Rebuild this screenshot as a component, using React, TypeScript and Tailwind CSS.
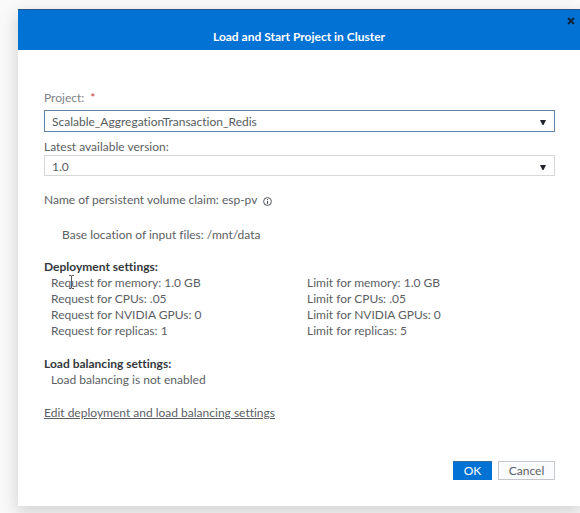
import type { ReactNode } from "react";

function SelectField({
  id,
  value,
  className,
}: {
  id: string;
  value: string;
  className: string;
}) {
  return (
    <div className="grid items-center">
      <select
        id={id}
        defaultValue={value}
        className={`col-start-1 row-start-1 w-full appearance-none rounded-none border bg-white pl-[7px] pr-6 pt-[2px] text-[12px] leading-4 text-[#585c60] outline-none ${className}`}
      >
        <option>{value}</option>
      </select>
      <svg
        viewBox="0 0 6 5"
        className="pointer-events-none col-start-1 row-start-1 mr-[9px] mt-[3px] h-[5px] w-[6px] justify-self-end"
        aria-hidden="true"
      >
        <path d="M0 0H6L3.5 5H2.5Z" fill="#202428" />
      </svg>
    </div>
  );
}

function Settings({ title, children }: { title: string; children: ReactNode }) {
  return (
    <section className="mt-4">
      <h2 className="font-bold text-[#34383c]">{title}</h2>
      {children}
    </section>
  );
}

const requests = [
  "Request for memory: 1.0 GB",
  "Request for CPUs: .05",
  "Request for NVIDIA GPUs: 0",
  "Request for replicas: 1",
];

const limits = [
  "Limit for memory: 1.0 GB",
  "Limit for CPUs: .05",
  "Limit for NVIDIA GPUs: 0",
  "Limit for replicas: 5",
];

export default function App() {
  return (
    <div className="min-h-screen overflow-hidden bg-[#fbfafa] pb-[6px] pl-[18px] pt-[9px] font-['Lato','Liberation_Sans',sans-serif] text-[12px] leading-4 text-[#5c6064] [font-variant-ligatures:none]">
      <div role="dialog" aria-labelledby="title" className="bg-white shadow-[0_6px_16px_2px_rgba(0,0,0,0.15)]">
        <header className="flex h-[41px] flex-col border-t border-[#2a5580] bg-[#0272d4]">
          <button type="button" aria-label="Close" className="mr-[5px] mt-[7px] self-end">
            <svg viewBox="0 0 8 8" className="h-2 w-2" aria-hidden="true">
              <path d="M1 1L7 7M7 1L1 7" stroke="#10243a" strokeWidth="2" />
            </svg>
          </button>
          <h1 id="title" className="mt-1 text-center font-bold text-white">
            Load and Start Project in Cluster
          </h1>
        </header>

        <form className="pb-[26px] pl-[26px] pr-[25px] pt-10">
          <label htmlFor="project" className="block text-[#808386]">
            Project: <span className="ml-[3px] text-[#c43b45]">*</span>
          </label>
          <div className="mt-1">
            <SelectField id="project" value="Scalable_AggregationTransaction_Redis" className="h-[22px] border-[#6685a5]" />
          </div>
          <label htmlFor="version" className="mt-[7px] block">
            Latest available version:
          </label>
          <SelectField id="version" value="1.0" className="h-[21px] border-[#d5d7d9]" />

          <p className="mt-4 flex items-center gap-[6px]">
            Name of persistent volume claim: esp-pv
            <svg viewBox="0 0 9 9" className="mt-[2px] h-[9px] w-[9px]" fill="none" aria-hidden="true">
              <circle cx="4.5" cy="4.5" r="3.9" stroke="#505458" />
              <path d="M4.5 4V7M4.5 2V3.2" stroke="#505458" />
            </svg>
          </p>
          <p className="ml-[18px] mt-[19px]">Base location of input files: /mnt/data</p>

          <Settings title="Deployment settings:">
            <div className="relative mb-[17px] grid grid-cols-2 pl-[7px]">
              <ul>
                {requests.map((text) => (
                  <li key={text}>{text}</li>
                ))}
              </ul>
              <ul className="pl-1">
                {limits.map((text) => (
                  <li key={text}>{text}</li>
                ))}
              </ul>
              <svg viewBox="0 0 5 14" className="absolute left-[25px] top-0 h-[14px] w-[5px]" fill="none" aria-hidden="true">
                <path d="M0 .5H2L2.5 1L3 .5H5M2.5 1V13M0 13.5H2L2.5 13L3 13.5H5" stroke="#55595d" />
              </svg>
            </div>
          </Settings>

          <Settings title="Load balancing settings:">
            <p className="pl-[7px]">Load balancing is not enabled</p>
          </Settings>

          <a href="#settings" className="mt-[17px] inline-block underline underline-offset-1">
            Edit deployment and load balancing settings
          </a>

          <div className="mt-10 flex justify-end gap-[6px]">
            <button type="button" className="h-[19px] w-[39px] border-t border-[#376b9c] bg-[#0272d4] text-white">
              OK
            </button>
            <button type="button" className="flex h-[19px] w-[57px] items-center justify-center border border-[#c5c7ca] bg-[#fafbfd]">
              Cancel
            </button>
          </div>
        </form>
      </div>
    </div>
  );
}
